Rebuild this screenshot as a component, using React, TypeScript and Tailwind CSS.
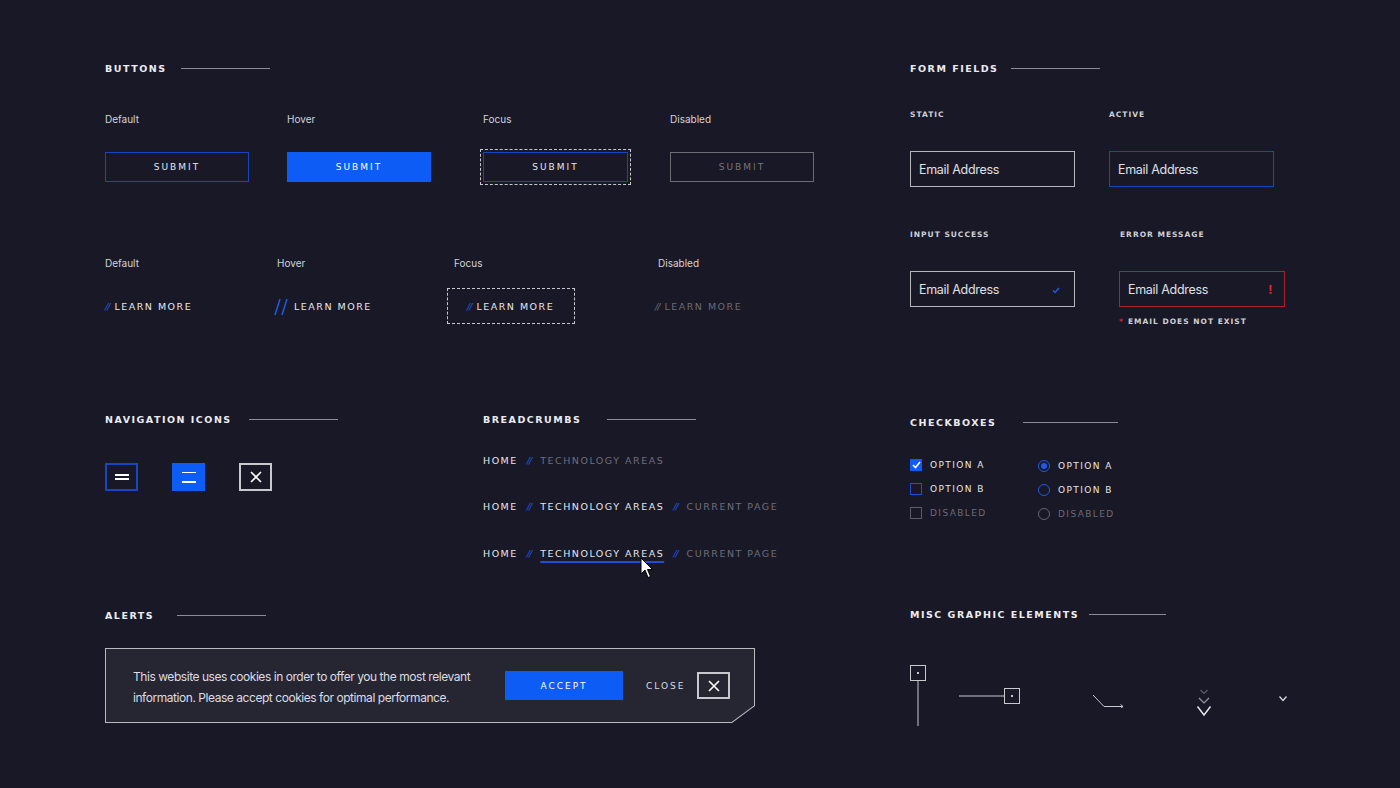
import React from 'react';

const wide = "font-['DejaVu_Sans',sans-serif]";
const body = "font-['Inter',sans-serif]";

function Heading({ title, line = 'w-[89px]', gap = 'gap-[20px]' }: { title: string; line?: string; gap?: string }) {
	return (
		<div className={`flex h-[12px] items-center ${gap}`}>
			<span className={`${wide} pt-[2px] text-[9.5px] leading-[12px] font-bold tracking-[1.5px] text-[#ececf0]`}>{title}</span>
			<span className={`${line} mt-[1px] h-px bg-[#8c8c96]`}></span>
		</div>
	);
}

function Label({ text }: { text: string }) {
	return <div className={`${body} h-[14px] text-[10px] leading-[14px] text-[#d4d4da]`}>{text}</div>;
}

function Slash({ color = 'text-[#1f5be8]' }: { color?: string }) {
	return <span className={`${wide} ${color} text-[9.5px] italic tracking-[-1px]`}>//</span>;
}

function SmallLabel({ text }: { text: string }) {
	return <div className={`${wide} h-[10px] pt-[1px] text-[7.5px] leading-[10px] font-bold tracking-[1px] text-[#d0d0d6]`}>{text}</div>;
}

const btnText = `${wide} pt-[2px] text-[9px] tracking-[2px]`;
const crumb = `${wide} text-[9.5px] leading-[14px] tracking-[1.5px]`;
const field = `${body} mt-[32px] flex h-[36px] w-[165px] items-center pt-[2px] pl-[8px] text-[12.5px] tracking-[-0.3px] text-[#e0e0e6]`;

function Cursor() {
	return (
		<svg width="14" height="22" viewBox="0 0 14 22" className="absolute left-[100px] top-[10px]">
			<path d="M1 1 L1 17 L5 13 L8 20.5 L10.5 19.5 L7.5 12.5 L12.5 12.5 Z" fill="#ffffff" stroke="#000000" strokeWidth="1" strokeLinejoin="round" />
		</svg>
	);
}

function MenuIcon({ active }: { active?: boolean }) {
	return (
		<div
			className={
				active
					? 'flex h-[28px] w-[33px] flex-col items-center justify-center gap-[8px] border border-[#0d5cf5] bg-[#0d5cf5]'
					: 'flex h-[28px] w-[33px] flex-col items-center justify-center gap-[2.5px] border-2 border-[#1646c2]'
			}
		>
			<span className="h-[1.5px] w-[14px] bg-white"></span>
			<span className="h-[1.5px] w-[14px] bg-white"></span>
		</div>
	);
}

function CloseBox({ w = 'w-[33px] h-[28px]' }: { w?: string }) {
	return (
		<div className={`${w} flex items-center justify-center border-2 border-[#c8c8ce]`}>
			<svg width="12" height="12" viewBox="0 0 12 12">
				<path d="M1 1 L11 11 M11 1 L1 11" stroke="#ffffff" strokeWidth="1.6" />
			</svg>
		</div>
	);
}

function Check({ state }: { state: 'on' | 'off' | 'disabled' }) {
	if (state === 'on')
		return (
			<span className="flex h-[12px] w-[12px] items-center justify-center bg-[#0d5cf5]">
				<svg width="9" height="8" viewBox="0 0 9 8">
					<path d="M1 4 L3.5 6.5 L8 1" stroke="#ffffff" strokeWidth="1.6" fill="none" />
				</svg>
			</span>
		);
	return <span className={state === 'off' ? 'h-[12px] w-[12px] border border-[#1f4fd0]' : 'h-[12px] w-[12px] border border-[#5c5c66]'}></span>;
}

function Radio({ state }: { state: 'on' | 'off' | 'disabled' }) {
	return (
		<span
			className={
				state === 'disabled'
					? 'flex h-[12px] w-[12px] items-center justify-center rounded-full border border-[#66666f]'
					: 'flex h-[12px] w-[12px] items-center justify-center rounded-full border border-[#1f5be8]'
			}
		>
			{state === 'on' && <span className="h-[6px] w-[6px] rounded-full bg-[#1f5be8]"></span>}
		</span>
	);
}

export default function App() {
	const checks: { label: string; state: 'on' | 'off' | 'disabled' }[] = [
		{ label: 'OPTION A', state: 'on' },
		{ label: 'OPTION B', state: 'off' },
		{ label: 'DISABLED', state: 'disabled' },
	];

	return (
		<div className="flex h-[788px] w-full overflow-hidden bg-[#181826] pl-[105px] pt-[62px] text-[#e6e6ec]">
			{/* left side */}
			<div className="w-[805px] shrink-0">
				<section className="h-[351px]">
					<Heading title="BUTTONS" gap="gap-[14px]" />
					<div className="mt-[38px] flex">
						<div className="w-[182px]">
							<Label text="Default" />
							<button className={`${btnText} mt-[26px] flex h-[30px] w-[144px] items-center justify-center border border-[#1646c2] text-[#e6e6ec]`}>SUBMIT</button>
						</div>
						<div className="w-[196px]">
							<Label text="Hover" />
							<button className={`${btnText} mt-[26px] flex h-[30px] w-[144px] items-center justify-center bg-[#0d5cf5] text-white`}>SUBMIT</button>
						</div>
						<div className="w-[187px]">
							<Label text="Focus" />
							<button className={`${btnText} mt-[26px] flex h-[30px] w-[145px] items-center justify-center border border-[#1646c2] text-[#e6e6ec] outline-1 outline-offset-[2px] outline-[#c8c8ce] outline-dashed`}>SUBMIT</button>
						</div>
						<div>
							<Label text="Disabled" />
							<button className={`${btnText} mt-[26px] flex h-[30px] w-[144px] items-center justify-center border border-[#6c6c75] text-[#76767f]`}>SUBMIT</button>
						</div>
					</div>

					<div className="mt-[74px] flex">
						<div className="w-[172px]">
							<Label text="Default" />
							<div className="mt-[18px] flex h-[36px] items-center gap-[5px] pt-[2px]">
								<Slash />
								<span className={`${crumb} text-[#e6e6ec]`}>LEARN MORE</span>
							</div>
						</div>
						<div className="w-[177px]">
							<Label text="Hover" />
							<div className="-ml-[3px] mt-[18px] flex h-[36px] items-center gap-[6px] pt-[2px]">
								<svg width="14" height="18" viewBox="0 0 14 18">
									<path d="M6 1 L1 17 M13 1 L8 17" stroke="#1f5be8" strokeWidth="1.5" />
								</svg>
								<span className={`${crumb} text-[#e6e6ec]`}>LEARN MORE</span>
							</div>
						</div>
						<div className="w-[204px]">
							<Label text="Focus" />
							<div className="-ml-[7px] mt-[18px] flex h-[36px] w-[128px] items-center gap-[5px] border border-dashed border-[#c8c8ce] pl-[19px] pt-[2px]">
								<Slash />
								<span className={`${crumb} text-[#e6e6ec]`}>LEARN MORE</span>
							</div>
						</div>
						<div>
							<Label text="Disabled" />
							<div className="-ml-[3px] mt-[18px] flex h-[36px] items-center gap-[5px] pt-[2px]">
								<Slash color="text-[#6c6c75]" />
								<span className={`${crumb} text-[#6c6c75]`}>LEARN MORE</span>
							</div>
						</div>
					</div>
				</section>

				<section className="flex h-[196px]">
					<div className="w-[378px]">
						<Heading title="NAVIGATION ICONS" gap="gap-[17px]" />
						<div className="mt-[38px] flex gap-[34px]">
							<MenuIcon />
							<MenuIcon active />
							<CloseBox />
						</div>
					</div>
					<div>
						<Heading title="BREADCRUMBS" gap="gap-[26px]" />
						<div className="mt-[29px] flex flex-col gap-[32px]">
							<div className="flex items-center gap-[9px]">
								<span className={`${crumb} text-[#e6e6ec]`}>HOME</span>
								<Slash />
								<span className={`${crumb} text-[#6e6e7c]`}>TECHNOLOGY AREAS</span>
							</div>
							<div className="flex items-center gap-[9px]">
								<span className={`${crumb} text-[#e6e6ec]`}>HOME</span>
								<Slash />
								<span className={`${crumb} text-[#e6e6ec]`}>TECHNOLOGY AREAS</span>
								<Slash />
								<span className={`${crumb} text-[#6e6e7c]`}>CURRENT PAGE</span>
							</div>
							<div className="flex items-center gap-[9px]">
								<span className={`${crumb} text-[#e6e6ec]`}>HOME</span>
								<Slash />
								<span className={`${crumb} relative text-[#e6e6ec] underline decoration-[#1d4fd0] decoration-[1.5px] underline-offset-[4px]`}>
									TECHNOLOGY AREAS
									<Cursor />
								</span>
								<Slash />
								<span className={`${crumb} text-[#6e6e7c]`}>CURRENT PAGE</span>
							</div>
						</div>
					</div>
				</section>

				<section>
					<Heading title="ALERTS" gap="gap-[23px]" />
					<div className="mt-[27px] h-[75px] w-[650px] bg-[#b9b9c0] [clip-path:polygon(0_0,100%_0,100%_58px,627px_100%,0_100%)]">
						<div className="flex h-full w-full items-center bg-[#262633] pl-[28px] [clip-path:polygon(1px_1px,649px_1px,649px_57.6px,626.6px_74px,1px_74px)]">
							<p className={`${body} w-[372px] pt-[2px] text-[12px] leading-[21px] tracking-[-0.45px] text-[#dcdce2]`}>
								This website uses cookies in order to offer you the most relevant information. Please accept cookies for optimal performance.
							</p>
							<button className={`${btnText} flex h-[29px] w-[118px] items-center justify-center bg-[#0d5cf5] text-white`}>ACCEPT</button>
							<span className={`${btnText} ml-[23px] text-[#dcdce2]`}>CLOSE</span>
							<div className="ml-[12px]">
								<CloseBox w="w-[33px] h-[27px]" />
							</div>
						</div>
					</div>
				</section>
			</div>

			{/* right side */}
			<div className="flex-1">
				<section className="h-[354px]">
					<Heading title="FORM FIELDS" gap="gap-[13px]" />
					<div className="mt-[35px] grid grid-cols-[199px_1fr]">
						<div>
							<SmallLabel text="STATIC" />
							<div className={`${field} border-[1.5px] border-[#b5b5bd]`}>Email Address</div>
						</div>
						<div>
							<SmallLabel text="ACTIVE" />
							<div className={`${field} border-[1.5px] border-[#1646c2]`}>Email Address</div>
						</div>
					</div>
					<div className="mt-[42px] grid grid-cols-[209px_1fr]">
						<div>
							<SmallLabel text="INPUT SUCCESS" />
							<div className={`${field} justify-between border-[1.5px] border-[#b5b5bd] pr-[14px]`}>
								<span>Email Address</span>
								<svg width="8" height="7" viewBox="0 0 8 7">
									<path d="M1 3.5 L3 5.5 L7 1" stroke="#1f5be8" strokeWidth="1.5" fill="none" />
								</svg>
							</div>
						</div>
						<div>
							<div className="ml-px">
								<SmallLabel text="ERROR MESSAGE" />
							</div>
							<div className={`${field} w-[166px] justify-between border-[1.5px] border-[#a8232b] pr-[12px]`}>
								<span>Email Address</span>
								<span className="text-[12px] font-bold text-[#e0262c]">!</span>
							</div>
							<div className={`${wide} mt-[9px] flex h-[10px] items-center gap-[4px] pt-[1px] text-[7.5px] font-bold tracking-[1px] text-[#d0d0d6]`}>
								<span className="text-[#e0262c]">*</span>
								<span>EMAIL DOES NOT EXIST</span>
							</div>
						</div>
					</div>
				</section>

				<section className="h-[192px]">
					<Heading title="CHECKBOXES" line="w-[95px]" gap="gap-[27px]" />
					<div className="mt-[31px] grid w-[260px] grid-cols-[128px_1fr]">
						<div className="flex flex-col gap-[12px]">
							{checks.map((c) => (
								<div key={c.label} className="flex h-[12px] items-center gap-[8px]">
									<Check state={c.state} />
									<span className={`${wide} pt-[2px] text-[9px] tracking-[1.4px] ${c.state === 'disabled' ? 'text-[#6c6c75]' : 'text-[#e6e6ec]'}`}>{c.label}</span>
								</div>
							))}
						</div>
						<div className="flex flex-col gap-[12px] pt-[1px]">
							{checks.map((c) => (
								<div key={c.label} className="flex h-[12px] items-center gap-[8px]">
									<Radio state={c.state} />
									<span className={`${wide} pt-[2px] text-[9px] tracking-[1.4px] ${c.state === 'disabled' ? 'text-[#6c6c75]' : 'text-[#e6e6ec]'}`}>{c.label}</span>
								</div>
							))}
						</div>
					</div>
				</section>

				<section>
					<Heading title="MISC GRAPHIC ELEMENTS" line="w-[77px]" gap="gap-[10px]" />
					<div className="mt-[45px] flex items-start">
						<svg width="16" height="62" viewBox="0 0 16 62">
							<rect x="0.5" y="0.5" width="15" height="15" fill="none" stroke="#c8c8ce" />
							<rect x="7" y="7" width="2" height="2" fill="#c8c8ce" />
							<path d="M8 16 L8 61" stroke="#c8c8ce" />
						</svg>
						<svg width="61" height="16" viewBox="0 0 61 16" className="ml-[33px] mt-[23px]">
							<path d="M0 8 L45 8" stroke="#c8c8ce" />
							<rect x="45.5" y="0.5" width="15" height="15" fill="none" stroke="#c8c8ce" />
							<rect x="52" y="7" width="2" height="2" fill="#c8c8ce" />
						</svg>
						<svg width="34" height="14" viewBox="0 0 34 14" className="ml-[72px] mt-[29px]">
							<path d="M1 1 L12 12.5 L31 12.5" stroke="#c8c8ce" fill="none" />
							<path d="M28.5 10.5 L31 12.5 L28.5 14.5" stroke="#c8c8ce" fill="none" />
						</svg>
						<svg width="18" height="30" viewBox="0 0 18 30" className="ml-[69px] mt-[23px]">
							<path d="M5.5 2 L9 5.5 L12.5 2" stroke="#5c5c68" fill="none" strokeWidth="1.2" />
							<path d="M4 10 L9 15 L14 10" stroke="#9a9aa4" fill="none" strokeWidth="1.2" />
							<path d="M2.5 18.5 L9 27 L15.5 18.5" stroke="#e6e6ec" fill="none" strokeWidth="1.5" />
						</svg>
						<svg width="10" height="8" viewBox="0 0 10 8" className="ml-[65px] mt-[30px]">
							<path d="M1.5 1.5 L5 5.5 L8.5 1.5" stroke="#d8d8de" fill="none" strokeWidth="1.3" />
						</svg>
					</div>
				</section>
			</div>
		</div>
	);
}
